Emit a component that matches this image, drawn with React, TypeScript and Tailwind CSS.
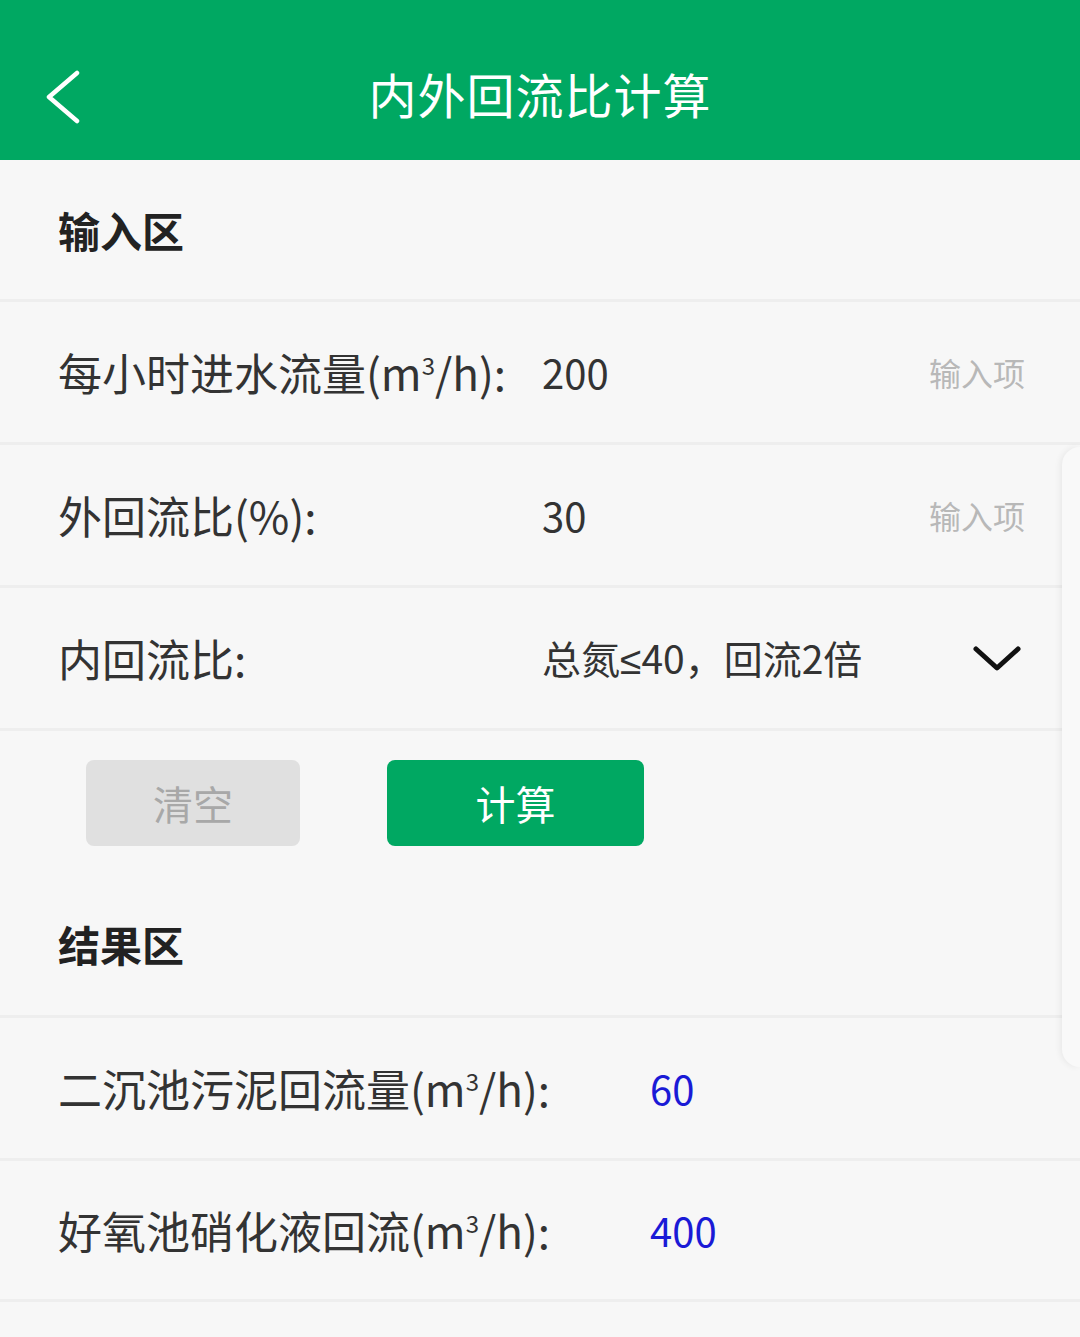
import React from "react";

const font = { fontFamily: '"Noto Sans CJK SC", "Noto Sans", sans-serif' };

function Sep() {
  return <div className="h-[3px] bg-[#eeeeee]" />;
}

function M3() {
  return (
    <>
      (m<span className="relative -top-[16px] text-[24px]">3</span>/h):
    </>
  );
}

function InputRow({ label, value, placeholder }: { label: React.ReactNode; value: string; placeholder: string }) {
  return (
    <div className="flex h-[140px] items-center pl-[58px] pr-[55px]">
      <div className="w-[484px] text-[44px] text-[#333333] leading-none whitespace-nowrap">{label}</div>
      <div className="flex-1 text-[40px] text-[#333333] leading-none">{value}</div>
      <div className="text-[32px] text-[#b8b8b8] leading-none">{placeholder}</div>
    </div>
  );
}

export default function App() {
  return (
    <div className="relative w-[1080px] h-[1337px] overflow-hidden bg-[#f7f7f7]" style={font}>
      <div className="relative flex h-[160px] items-center justify-center bg-[#00a862]">
        <svg className="absolute left-[44px] top-[70px]" width="40" height="54" viewBox="0 0 40 54" fill="none">
          <polyline points="33,3 5,27 33,51" stroke="white" strokeWidth="4.5" strokeLinecap="round" strokeLinejoin="round" />
        </svg>
        <div className="pt-[28px] pb-[2px] text-[48px] text-white leading-none tracking-[1px]">内外回流比计算</div>
      </div>

      <div className="flex h-[139px] items-center pl-[58px] text-[42px] font-bold text-[#222222] leading-none">输入区</div>
      <Sep />
      <InputRow
        label={
          <>
            每小时进水流量<M3 />
          </>
        }
        value="200"
        placeholder="输入项"
      />
      <Sep />
      <InputRow label="外回流比(%):" value="30" placeholder="输入项" />
      <Sep />
      <div className="flex h-[140px] items-center pl-[58px] pr-[58px]">
        <div className="w-[484px] text-[44px] text-[#333333] leading-none">内回流比:</div>
        <div className="flex-1 text-[39px] text-[#333333] leading-none whitespace-nowrap">
          总氮<span style={{ fontFamily: '"Noto Sans", sans-serif' }}>≤</span>40，回流2倍
        </div>
        <svg width="50" height="30" viewBox="0 0 50 30" fill="none">
          <polyline points="4,6 25,25 46,6" stroke="#111111" strokeWidth="5" strokeLinecap="round" strokeLinejoin="round" />
        </svg>
      </div>
      <Sep />

      <div className="flex h-[141px] items-start gap-[87px] pl-[86px] pt-[29px]">
        <button className="flex h-[86px] w-[214px] items-center justify-center rounded-[8px] bg-[#e0e0e0] text-[40px] text-[#a8a8a8] leading-none">
          清空
        </button>
        <button className="flex h-[86px] w-[257px] items-center justify-center rounded-[8px] bg-[#00a862] text-[40px] text-white leading-none">
          计算
        </button>
      </div>

      <div className="flex h-[143px] items-center pl-[58px] text-[42px] font-bold text-[#222222] leading-none">结果区</div>
      <Sep />
      <div className="flex h-[140px] items-center pl-[58px]">
        <div className="w-[592px] text-[44px] text-[#333333] leading-none whitespace-nowrap">
          二沉池污泥回流量<M3 />
        </div>
        <div className="text-[40px] text-[#1a1ad6] leading-none">60</div>
      </div>
      <Sep />
      <div className="flex h-[138px] items-center pl-[58px]">
        <div className="w-[592px] text-[44px] text-[#333333] leading-none whitespace-nowrap">
          好氧池硝化液回流<M3 />
        </div>
        <div className="text-[40px] text-[#1a1ad6] leading-none">400</div>
      </div>
      <Sep />

      <div className="absolute right-0 top-[447px] h-[620px] w-[18px] rounded-l-[26px] bg-[#f9f9f9] shadow-[-2px_0_6px_rgba(0,0,0,0.06)]" />
    </div>
  );
}
